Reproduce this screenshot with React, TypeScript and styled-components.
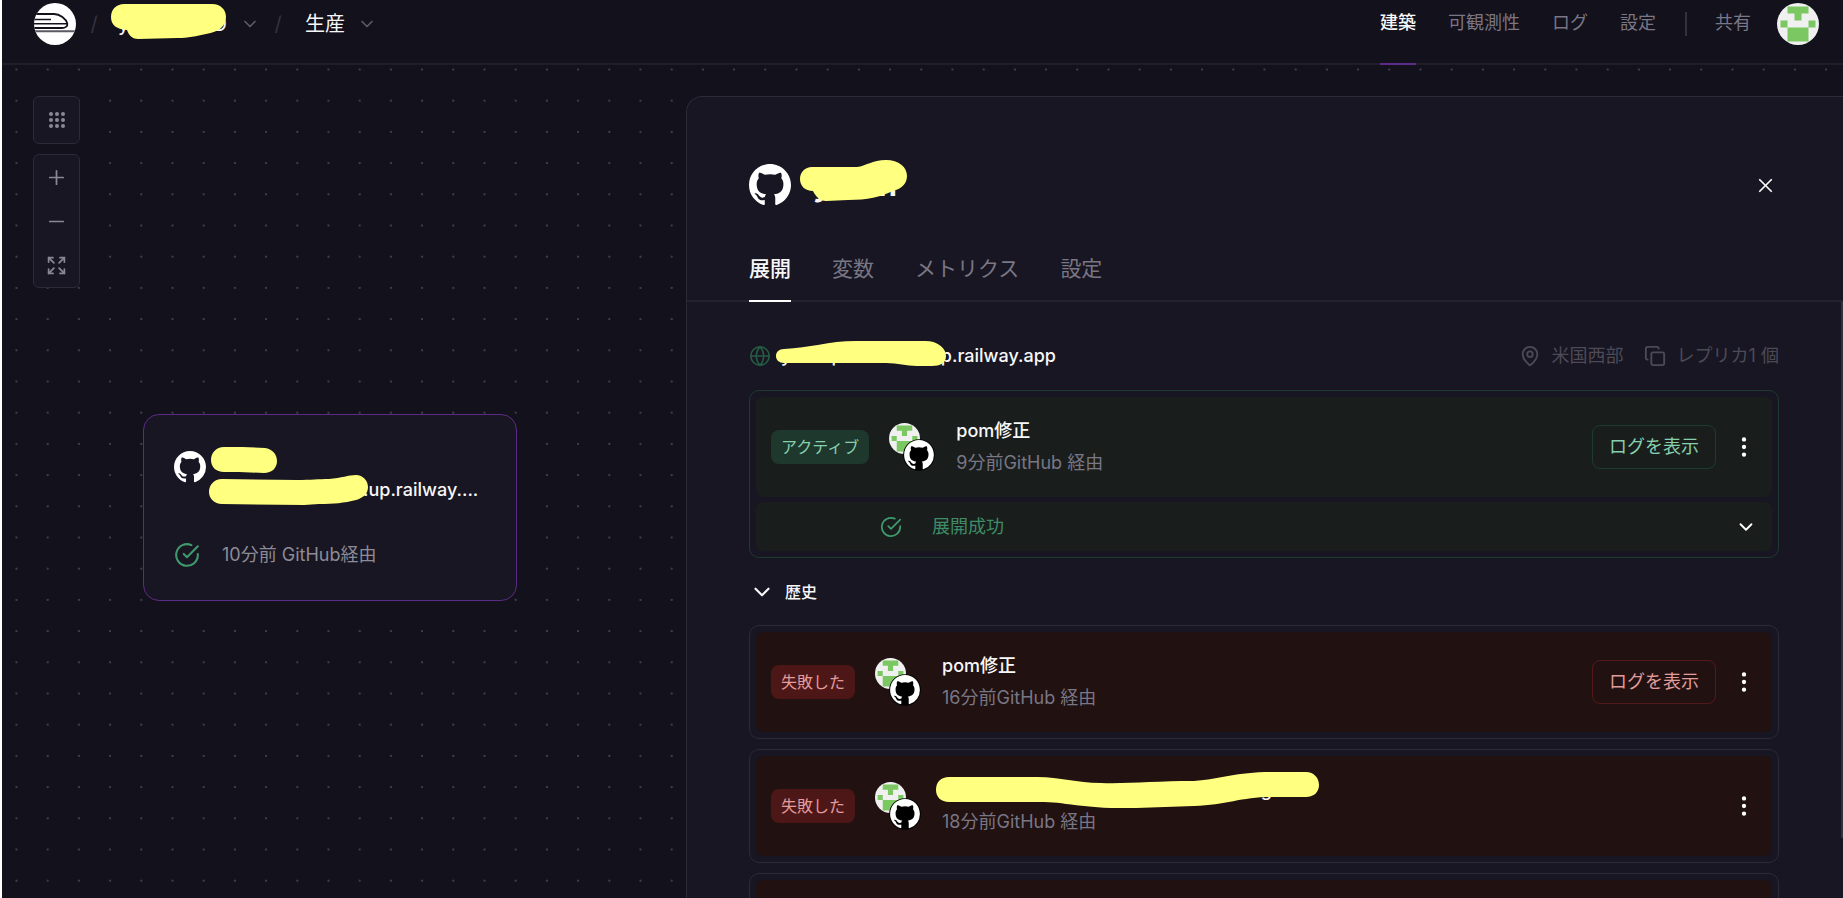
import React from "react";
import styled, { createGlobalStyle, css } from "styled-components";
import {
  ChevronDown,
  Copy,
  EllipsisVertical,
  Expand,
  Globe,
  MapPin,
  Minus,
  Plus,
  X,
} from "lucide-react";

const color = {
  page: "#13111c",
  surface: "#181622",
  line: "#2c2a38",
  headerLine: "#201e2b",
  text: "#f7f7f8",
  muted: "#797685",
  faint: "#4c4a57",
  purple: "#5c2b87",
  marker: "#ffff80",
};

const tones = {
  success: {
    border: "#1c3a2e",
    row: "#191e1c",
    badge: "#1f382d",
    badgeText: "#86d0ae",
    button: "#1d3b30",
  },
  failed: {
    border: color.line,
    row: "#211111",
    badge: "#4e1717",
    badgeText: "#e29c9c",
    button: "#561919",
  },
};

type Tone = keyof typeof tones;

const GlobalStyle = createGlobalStyle`
  *, *::before, *::after { box-sizing: border-box; }
  body {
    margin: 0;
    background: ${color.page};
    color: ${color.text};
    font-family: Inter, "Noto Sans CJK JP", sans-serif;
    font-size: 18px;
    line-height: 32px;
  }
  button {
    margin: 0;
    padding: 0;
    border: 0;
    background: none;
    color: inherit;
    font: inherit;
    cursor: pointer;
  }
  a { color: inherit; text-decoration: none; }
  h1, h2, p { margin: 0; font: inherit; }
  svg { display: block; flex: none; }
`;

const Page = styled.div`
  display: flex;
  flex-direction: column;
  height: 100vh;
  overflow: hidden;
  border-left: 2px solid #fff;
`;

/* ---------- header ---------- */

const Header = styled.header`
  display: flex;
  justify-content: space-between;
  flex: none;
  height: 65px;
  padding: 0 24px 0 32px;
  border-bottom: 2px solid ${color.headerLine};
`;

const Crumbs = styled.nav`
  display: flex;
  align-items: center;
  height: 48px;
  font-size: 20px;
`;

const Slash = styled.span`
  width: 36px;
  color: #35333f;
  text-align: center;
`;

const CrumbButton = styled.button<{ $wide?: boolean }>`
  display: flex;
  align-items: center;
  justify-content: space-between;
  gap: 12px;
  min-width: ${(p) => (p.$wide ? "142px" : "0")};
  margin-left: ${(p) => (p.$wide ? "6px" : "9px")};
  white-space: nowrap;

  > svg { color: #5d5b68; }
`;

const HeaderNav = styled.nav`
  display: flex;
  gap: 32px;
  height: 65px;
`;

const NavLink = styled.a<{ $active?: boolean }>`
  padding-top: 7px;
  border-bottom: 2px solid ${(p) => (p.$active ? color.purple : "transparent")};
  color: ${(p) => (p.$active ? color.text : color.muted)};
  font-weight: ${(p) => (p.$active ? 500 : 400)};
`;

const NavDivider = styled.span`
  width: 2px;
  height: 24px;
  margin: 12px -4px 0 -3px;
  background: #33313e;
`;

const AvatarButton = styled.button`
  align-self: flex-start;
  margin: 3px 0 0 -6px;
`;

/* ---------- canvas ---------- */

const Workspace = styled.main`
  position: relative;
  display: grid;
  grid-template-columns: minmax(320px, 684px) minmax(0, 1fr);
  flex: 1;
  min-height: 0;
`;

const DotGrid = styled.svg`
  position: absolute;
  inset: 0;
  width: 100%;
  height: 100%;
`;

const Canvas = styled.section`
  position: relative;
  padding: 31px;
`;

const Tools = styled.div`
  display: flex;
  flex-direction: column;
  gap: 10px;
  width: 47px;
`;

const ToolGroup = styled.div`
  display: flex;
  flex-direction: column;
  border: 1px solid ${color.line};
  border-radius: 6px;
  background: ${color.surface};
  color: #8a8894;
`;

const ToolButton = styled.button<{ $single?: boolean }>`
  display: flex;
  align-items: center;
  justify-content: center;
  height: ${(p) => (p.$single ? "46px" : "44px")};
`;

const ServiceNode = styled.article`
  position: absolute;
  left: 141px;
  top: 349px;
  display: flex;
  flex-direction: column;
  width: 374px;
  padding: 32px 30px 29px;
  border: 1px solid ${color.purple};
  border-radius: 16px;
  background: ${color.surface};
`;

const NodeHead = styled.div`
  display: flex;
  gap: 12px;
  font-weight: 500;
  line-height: 30px;

  > svg { margin-top: 4px; }
`;

const NodeName = styled.div`
  position: relative;
  line-height: 28px;
`;

const NodeStatus = styled.p`
  display: flex;
  align-items: center;
  gap: 22px;
  margin-top: 34px;
  color: #8d8b97;
`;

/* ---------- covered names ---------- */

const Covered = styled.span<{ $width: number; $align?: string }>`
  position: relative;
  display: inline-flex;
  justify-content: ${(p) => p.$align ?? "space-between"};
  width: ${(p) => p.$width}px;
  white-space: nowrap;
`;

const Stroke = styled.svg<{ $x: number; $y: number }>`
  position: absolute;
  left: ${(p) => p.$x}px;
  top: ${(p) => p.$y}px;
  fill: ${color.marker};
`;

function Marker({ d, w, h, x, y }: { d: string; w: number; h: number; x: number; y: number }) {
  return (
    <Stroke $x={x} $y={y} width={w} height={h} viewBox={`0 0 ${w} ${h}`} aria-hidden>
      <path d={d} />
    </Stroke>
  );
}

/* ---------- service panel ---------- */

const Panel = styled.aside`
  position: relative;
  display: flex;
  flex-direction: column;
  min-height: 0;
  margin-top: 31px;
  border-top: 1px solid ${color.line};
  border-left: 1px solid ${color.line};
  border-top-left-radius: 16px;
  background: ${color.surface};
`;

const PanelHead = styled.header`
  display: flex;
  align-items: center;
  gap: 22px;
  padding: 67px 66px 0 62px;
`;

const ServiceTitle = styled.h1`
  font-size: 30px;
  font-weight: 700;
  line-height: 42px;
`;

const CloseButton = styled.button`
  margin-left: auto;
`;

const Tabs = styled.nav`
  display: flex;
  gap: 41px;
  margin-top: 47px;
  padding: 0 62px;
  border-bottom: 2px solid #24222f;
`;

const Tab = styled.a<{ $active?: boolean }>`
  margin-bottom: -2px;
  padding-bottom: 15px;
  border-bottom: 2px solid ${(p) => (p.$active ? "#fff" : "transparent")};
  color: ${(p) => (p.$active ? color.text : color.muted)};
  font-size: 21px;
  font-weight: ${(p) => (p.$active ? 500 : 400)};
`;

const PanelBody = styled.div`
  flex: 1;
  min-height: 0;
  padding: 38px 64px 0 62px;
  overflow: hidden;
`;

const ScrollThumb = styled.span`
  position: absolute;
  right: 0;
  top: 205px;
  bottom: 60px;
  width: 2px;
  background: #34333d;
`;

const ServiceInfo = styled.div`
  display: flex;
  align-items: center;
  margin-bottom: 18px;
`;

const Domain = styled.a`
  display: flex;
  align-items: center;
  gap: 10px;
  margin-right: auto;
  font-weight: 500;

  > svg { color: #265b43; }
`;

const Meta = styled.span`
  display: flex;
  align-items: center;
  gap: 11px;
  margin-left: 20px;
  color: ${color.faint};
`;

const Card = styled.article<{ $tone: Tone }>`
  display: flex;
  flex-direction: column;
  gap: 5px;
  padding: 6px;
  border: 1px solid ${(p) => tones[p.$tone].border};
  border-radius: 10px;
`;

const rowSurface = css<{ $tone: Tone }>`
  display: flex;
  align-items: center;
  border-radius: 7px;
  background: ${(p) => tones[p.$tone].row};
`;

const DeployRow = styled.div<{ $tone: Tone }>`
  ${rowSurface}
  height: 100px;
  padding: 0 15px;
`;

const StatusRow = styled.button<{ $tone: Tone }>`
  ${rowSurface}
  gap: 30px;
  height: 49px;
  padding: 0 15px 0 124px;
  color: #3f8c66;

  > svg:last-child {
    margin-left: auto;
    color: #fff;
  }
`;

const Badge = styled.span<{ $tone: Tone }>`
  padding: 0 10px;
  border-radius: 8px;
  background: ${(p) => tones[p.$tone].badge};
  color: ${(p) => tones[p.$tone].badgeText};
  font-size: 16px;
  line-height: 34px;
  white-space: nowrap;
`;

const Avatars = styled.span`
  display: grid;
  width: 46px;
  height: 48px;
  margin: 0 21px 0 20px;

  > * { grid-area: 1 / 1; }
  > :last-child { place-self: end; }
`;

const DeployText = styled.div`
  margin-right: auto;
`;

const DeployTitle = styled.h2`
  height: 32px;
  font-weight: 500;
`;

const DeployMeta = styled.p`
  color: ${color.muted};
`;

const LogButton = styled.button<{ $tone: Tone }>`
  height: 44px;
  margin-right: 15px;
  padding: 0 16px;
  border: 1px solid ${(p) => tones[p.$tone].button};
  border-radius: 8px;
  color: ${(p) => tones[p.$tone].badgeText};
`;

const HistoryToggle = styled.button`
  display: flex;
  align-items: center;
  gap: 10px;
  height: 67px;
  font-size: 16px;
  font-weight: 500;
`;

const History = styled.div`
  display: flex;
  flex-direction: column;
  gap: 10px;
`;

/* ---------- drawings ---------- */

const githubPath =
  "M8 0C3.58 0 0 3.58 0 8c0 3.54 2.29 6.53 5.47 7.59.4.07.55-.17.55-.38 0-.19-.01-.82-.01-1.49-2.01.37-2.53-.49-2.69-.94-.09-.23-.48-.94-.82-1.13-.28-.15-.68-.52-.01-.53.63-.01 1.08.58 1.23.82.72 1.21 1.87.87 2.33.66.07-.52.28-.87.51-1.07-1.78-.2-3.64-.89-3.64-3.95 0-.87.31-1.59.82-2.15-.08-.2-.36-1.02.08-2.12 0 0 .67-.21 2.2.82.64-.18 1.32-.27 2-.27s1.36.09 2 .27c1.53-1.04 2.2-.82 2.2-.82.44 1.1.16 1.92.08 2.12.51.56.82 1.27.82 2.15 0 3.07-1.87 3.75-3.65 3.95.29.25.54.73.54 1.48 0 1.07-.01 1.93-.01 2.2 0 .21.15.46.55.38A8.01 8.01 0 0 0 16 8c0-4.42-3.58-8-8-8Z";

function GithubMark({ size, backed }: { size: number; backed?: boolean }) {
  return (
    <svg width={size} height={size} viewBox={backed ? "-0.6 -0.6 17.2 17.2" : "0 0 16 16"} aria-hidden>
      {backed && <circle cx="8" cy="8" r="8.5" fill="#000" />}
      <path d={githubPath} fill="#fff" />
    </svg>
  );
}

function RailwayLogo() {
  return (
    <svg width="42" height="42" viewBox="0 0 42 42" role="img" aria-label="Railway">
      <defs>
        <clipPath id="logo-disc">
          <circle cx="21" cy="21" r="21" />
        </clipPath>
      </defs>
      <g clipPath="url(#logo-disc)" fill="none" stroke={color.page}>
        <rect width="42" height="42" fill="#fff" stroke="none" />
        <path d="M0 11H20C26 11 32 16 33.300 20.500C34 23.500 31 25 28 25H0" strokeWidth="1.800" />
        <path d="M0 16.500H17M0 20.700H33" strokeWidth="1.500" />
        <path d="M0 28.200H42" strokeWidth="2" stroke="#5a5862" />
      </g>
    </svg>
  );
}

function Identicon({ size }: { size: number }) {
  return (
    <svg width={size} height={size} viewBox="0 0 42 42" aria-hidden>
      <defs>
        <clipPath id={`avatar-${size}`}>
          <circle cx="21" cy="21" r="21" />
        </clipPath>
      </defs>
      <g clipPath={`url(#avatar-${size})`}>
        <rect width="42" height="42" fill="#f0f0f0" />
        <path
          d="M10.500 3.500H31.500V10.500H24.500V17.500H17.500V10.500H10.500ZM3.500 17.500H10.500V24.500H3.500ZM31.500 17.500H38.500V24.500H31.500ZM10.500 24.500H31.500V38.500H10.500Z"
          fill="#7bc862"
        />
      </g>
    </svg>
  );
}

function CheckCircle({ size }: { size: number }) {
  return (
    <svg
      width={size}
      height={size}
      viewBox="0 0 24 24"
      fill="none"
      stroke="#3f9a6d"
      strokeWidth="1.900"
      strokeLinecap="round"
      strokeLinejoin="round"
      aria-hidden
    >
      <path d="M22 11.080V12a10 10 0 1 1-5.930-9.140" />
      <path d="M22 4 12 14.010l-3-3" />
    </svg>
  );
}

function NineDots() {
  return (
    <svg width="18" height="18" viewBox="0 0 18 18" fill="currentColor" aria-hidden>
      {[3, 9, 15].map((y) => [3, 9, 15].map((x) => <circle key={`${x}-${y}`} cx={x} cy={y} r="2" />))}
    </svg>
  );
}

function Dots() {
  return (
    <DotGrid aria-hidden>
      <defs>
        <pattern id="dots" x="13.500" y="3.500" width="31.200" height="31.200" patternUnits="userSpaceOnUse">
          <circle cx="1" cy="1" r="1" fill="#4d4b59" />
        </pattern>
      </defs>
      <rect width="100%" height="100%" fill="url(#dots)" />
    </DotGrid>
  );
}

/* ---------- content ---------- */

interface DeploymentProps {
  tone: Tone;
  status: string;
  title: React.ReactNode;
  meta: string;
  logs?: boolean;
  note?: string;
}

function Deployment({ tone, status, title, meta, logs, note }: DeploymentProps) {
  return (
    <Card $tone={tone}>
      <DeployRow $tone={tone}>
        <Badge $tone={tone}>{status}</Badge>
        <Avatars>
          <Identicon size={31} />
          <GithubMark size={32} backed />
        </Avatars>
        <DeployText>
          <DeployTitle>{title}</DeployTitle>
          <DeployMeta>{meta}</DeployMeta>
        </DeployText>
        {logs && <LogButton $tone={tone}>ログを表示</LogButton>}
        <button aria-label="メニュー">
          <EllipsisVertical size={26} color="#fff" />
        </button>
      </DeployRow>
      {note && (
        <StatusRow $tone={tone}>
          <CheckCircle size={22} />
          {note}
          <ChevronDown size={22} />
        </StatusRow>
      )}
    </Card>
  );
}

export default function App() {
  return (
    <>
      <GlobalStyle />
      <Page>
        <Header>
          <Crumbs>
            <a href="#home">
              <RailwayLogo />
            </a>
            <Slash>/</Slash>
            <CrumbButton $wide>
              <Covered $width={109}>
                <span>y</span>
                <span>D</span>
                <Marker
                  x={-7}
                  y={-4}
                  w={115}
                  h={35}
                  d="M13 0H101C110 0 115 6 115 13C115 22 108 28 95 30C85 32 78 34 66 34L27 35C22 35 18 32 16 26C5 25 0 21 0 13C0 5 6 0 13 0Z"
                />
              </Covered>
              <ChevronDown size={20} />
            </CrumbButton>
            <Slash>/</Slash>
            <CrumbButton>
              生産
              <ChevronDown size={20} />
            </CrumbButton>
          </Crumbs>
          <HeaderNav>
            <NavLink href="#architecture" $active>
              建築
            </NavLink>
            <NavLink href="#observability">可観測性</NavLink>
            <NavLink href="#logs">ログ</NavLink>
            <NavLink href="#settings">設定</NavLink>
            <NavDivider />
            <NavLink href="#share">共有</NavLink>
            <AvatarButton aria-label="アカウント">
              <Identicon size={42} />
            </AvatarButton>
          </HeaderNav>
        </Header>

        <Workspace>
          <Dots />
          <Canvas>
            <Tools>
              <ToolGroup>
                <ToolButton $single aria-label="グリッド">
                  <NineDots />
                </ToolButton>
              </ToolGroup>
              <ToolGroup>
                <ToolButton aria-label="拡大">
                  <Plus size={23} strokeWidth={1.8} />
                </ToolButton>
                <ToolButton aria-label="縮小">
                  <Minus size={23} strokeWidth={1.8} />
                </ToolButton>
                <ToolButton aria-label="全体表示">
                  <Expand size={21} />
                </ToolButton>
              </ToolGroup>
            </Tools>

            <ServiceNode>
              <NodeHead>
                <GithubMark size={32} />
                <div>
                  <NodeName>
                    y
                    <Marker
                      x={-7}
                      y={0}
                      w={66}
                      h={26}
                      d="M13 0H31L54 1C61 2 66 7 66 14C66 21 61 26 53 26L28 25H13C5 25 0 20 0 13C0 6 5 0 13 0Z"
                    />
                  </NodeName>
                  <div>
                    <Covered $width={145}>
                      <span>y</span>
                      <Marker
                        x={-9}
                        y={0}
                        w={159}
                        h={30}
                        d="M13 4L88 5C102 5 110 4 120 4C133 3 139 0 147 0C154 0 159 6 159 12C159 19 154 23 147 25C135 28 125 29 110 29L95 30L13 29C5 29 0 23 0 17C0 10 5 4 13 4Z"
                      />
                    </Covered>
                    .up.railway....
                  </div>
                </div>
              </NodeHead>
              <NodeStatus>
                <CheckCircle size={26} />
                10分前 GitHub経由
              </NodeStatus>
            </ServiceNode>
          </Canvas>

          <Panel>
            <PanelHead>
              <GithubMark size={42} />
              <ServiceTitle>
                <Covered $width={84}>
                  <span>y</span>
                  <span>n</span>
                  <Marker
                    x={-13}
                    y={-4}
                    w={107}
                    h={41}
                    d="M12 7H57C66 6 72 0 86 0C99 0 107 7 107 16C107 24 101 29 93 31C80 37 68 40 48 40L26 41C20 41 16 37 13 31C5 31 0 26 0 19C0 12 5 7 12 7Z"
                  />
                </Covered>
              </ServiceTitle>
              <CloseButton aria-label="閉じる">
                <X size={23} strokeWidth={1.8} />
              </CloseButton>
            </PanelHead>
            <Tabs>
              <Tab href="#deployments" $active>
                展開
              </Tab>
              <Tab href="#variables">変数</Tab>
              <Tab href="#metrics">メトリクス</Tab>
              <Tab href="#service-settings">設定</Tab>
            </Tabs>
            <PanelBody>
              <ServiceInfo>
                <Domain href="#domain">
                  <Globe size={22} strokeWidth={1.8} />
                  <span>
                    <Covered $width={149} $align="flex-start">
                      <span>yxxxxp</span>
                      <Marker
                        x={-5}
                        y={1}
                        w={170}
                        h={25}
                        d="M8 8C34 7 52 0 80 0H149C163 0 170 8 170 15C170 22 164 25 156 25H141C130 25 122 22 110 22H8C3 22 0 19 0 15C0 11 3 8 8 8Z"
                      />
                    </Covered>
                    up.railway.app
                  </span>
                </Domain>
                <Meta>
                  <MapPin size={22} />
                  米国西部
                </Meta>
                <Meta>
                  <Copy size={22} />
                  レプリカ1 個
                </Meta>
              </ServiceInfo>

              <Deployment
                tone="success"
                status="アクティブ"
                title="pom修正"
                meta="9分前GitHub 経由"
                note="展開成功"
                logs
              />
              <HistoryToggle>
                <ChevronDown size={26} />
                歴史
              </HistoryToggle>
              <History>
                <Deployment tone="failed" status="失敗した" title="pom修正" meta="16分前GitHub 経由" logs />
                <Deployment
                  tone="failed"
                  status="失敗した"
                  title={
                    <Covered $width={330} $align="flex-end">
                      <span>g</span>
                      <Marker
                        x={-6}
                        y={-2}
                        w={383}
                        h={36}
                        d="M13 5H101C125 5 140 11 165 11C190 12 220 9 258 9C285 7 300 0 335 0H370C378 0 383 6 383 13C383 20 378 25 370 25H335C305 25 290 33 258 34L200 36C165 37 150 34 130 32C118 30 110 30 90 30H13C5 30 0 25 0 18C0 10 5 5 13 5Z"
                      />
                    </Covered>
                  }
                  meta="18分前GitHub 経由"
                />
                <Card $tone="failed">
                  <DeployRow $tone="failed" />
                </Card>
              </History>
            </PanelBody>
            <ScrollThumb />
          </Panel>
        </Workspace>
      </Page>
    </>
  );
}
